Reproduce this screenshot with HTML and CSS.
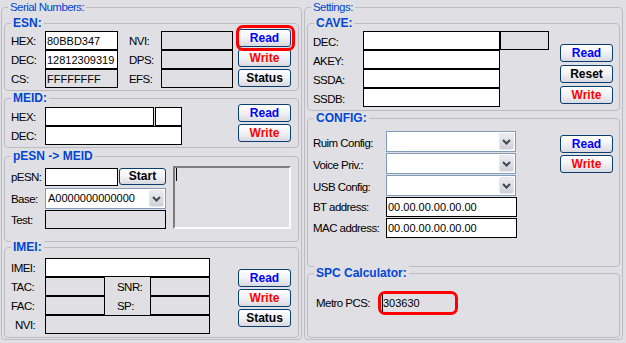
FILE: index.html
```html
<!DOCTYPE html>
<html lang="en">
<head>
    <meta charset="UTF-8">
    <meta name="viewport" content="width=device-width, initial-scale=1.0">
    <title>Serial Numbers</title>
    <link rel="stylesheet" href="styles.css">
</head>
<body>
    <div class="window">
        <!-- left side -->
        <section class="panel panel-serial">
            <div class="panel-title">Serial Numbers:</div>

            <div class="group group-esn">
                <div class="group-title">ESN:</div>
                <div class="group-body">
                    <div class="fields esn-grid">
                        <label>HEX:</label><input type="text" value="80BBD347">
                        <label class="col2">NVI:</label><input type="text" class="off" readonly>
                        <label>DEC:</label><input type="text" value="12812309319">
                        <label class="col2">DPS:</label><input type="text" class="off" readonly>
                        <label>CS:</label><input type="text" class="off" value="FFFFFFFF" readonly>
                        <label class="col2">EFS:</label><input type="text" class="off" readonly>
                    </div>
                    <div class="btns">
                        <div class="ring ring-btn"><button class="btn blue">Read</button></div>
                        <button class="btn red">Write</button>
                        <button class="btn">Status</button>
                    </div>
                </div>
            </div>

            <div class="group group-meid">
                <div class="group-title">MEID:</div>
                <div class="group-body">
                    <div class="fields meid-grid">
                        <label>HEX:</label><input type="text"><input type="text" class="tiny">
                        <label>DEC:</label><input type="text" class="wide">
                    </div>
                    <div class="btns">
                        <button class="btn blue">Read</button>
                        <button class="btn red">Write</button>
                    </div>
                </div>
            </div>

            <div class="group group-pesn">
                <div class="group-title">pESN -&gt; MEID</div>
                <div class="group-body">
                    <div class="fields pesn-grid">
                        <label>pESN:</label><input type="text" class="h18"><button class="btn btn-start">Start</button>
                        <label>Base:</label>
                        <div class="combo span2">
                            <span class="combo-text">A0000000000000</span>
                            <span class="combo-btn"><svg width="9" height="6" viewBox="0 0 9 6"><path d="M1 1l3.5 3.5L8 1" fill="none" stroke="#46464e" stroke-width="2"/></svg></span>
                        </div>
                        <label>Test:</label><input type="text" class="off span2" readonly>
                    </div>
                    <div class="memo"><span class="caret"></span></div>
                </div>
            </div>

            <div class="group group-imei">
                <div class="group-title">IMEI:</div>
                <div class="group-body">
                    <div class="fields imei-grid">
                        <label>IMEI:</label><input type="text" class="span3">
                        <label>TAC:</label><input type="text" class="off" readonly>
                        <label class="mid">SNR:</label><input type="text" class="off" readonly>
                        <label>FAC:</label><input type="text" class="off" readonly>
                        <label class="mid">SP:</label><input type="text" class="off" readonly>
                        <label class="nvi">NVI:</label><input type="text" class="off span3" readonly>
                    </div>
                    <div class="btns">
                        <button class="btn blue">Read</button>
                        <button class="btn red">Write</button>
                        <button class="btn">Status</button>
                    </div>
                </div>
            </div>
        </section>

        <!-- right side -->
        <section class="panel panel-settings">
            <div class="panel-title">Settings:</div>

            <div class="group group-cave">
                <div class="group-title">CAVE:</div>
                <div class="group-body">
                    <div class="fields cave-grid">
                        <label class="low">DEC:</label><input type="text"><input type="text" class="off" readonly>
                        <label class="low">AKEY:</label><input type="text">
                        <label class="low">SSDA:</label><input type="text">
                        <label class="low">SSDB:</label><input type="text">
                    </div>
                    <div class="btns">
                        <button class="btn blue">Read</button>
                        <button class="btn">Reset</button>
                        <button class="btn red">Write</button>
                    </div>
                </div>
            </div>

            <div class="group group-config">
                <div class="group-title">CONFIG:</div>
                <div class="group-body">
                    <div class="fields config-grid">
                        <label class="low">Ruim Config:</label>
                        <div class="combo">
                            <span class="combo-text"></span>
                            <span class="combo-btn"><svg width="9" height="6" viewBox="0 0 9 6"><path d="M1 1l3.5 3.5L8 1" fill="none" stroke="#46464e" stroke-width="2"/></svg></span>
                        </div>
                        <label class="low">Voice Priv.:</label>
                        <div class="combo">
                            <span class="combo-text"></span>
                            <span class="combo-btn"><svg width="9" height="6" viewBox="0 0 9 6"><path d="M1 1l3.5 3.5L8 1" fill="none" stroke="#46464e" stroke-width="2"/></svg></span>
                        </div>
                        <label class="low">USB Config:</label>
                        <div class="combo">
                            <span class="combo-text"></span>
                            <span class="combo-btn"><svg width="9" height="6" viewBox="0 0 9 6"><path d="M1 1l3.5 3.5L8 1" fill="none" stroke="#46464e" stroke-width="2"/></svg></span>
                        </div>
                        <label>BT address:</label><input type="text" value="00.00.00.00.00.00">
                        <label>MAC address:</label><input type="text" value="00.00.00.00.00.00">
                    </div>
                    <div class="btns">
                        <button class="btn blue">Read</button>
                        <button class="btn red">Write</button>
                    </div>
                </div>
            </div>

            <div class="group group-spc">
                <div class="group-title">SPC Calculator:</div>
                <div class="group-body">
                    <label class="spc-label">Metro PCS:</label>
                    <div class="ring ring-pcs"><input type="text" class="off" value="303630" readonly></div>
                </div>
            </div>
        </section>
    </div>
</body>
</html>
```

FILE: styles.css
```css
* { margin: 0; padding: 0; box-sizing: border-box; }
body { background: #e0dfe3; color: #000; font: 11.5px "Liberation Sans", Arial, sans-serif; letter-spacing: -0.55px; }

/* frame */
.window { display: flex; align-items: flex-start; padding: 7px 0 0 1px; }
.panel { border: 1px solid #bdbcc2; border-radius: 4px; padding: 0 2px 1px; }
.panel-serial { width: 301px; }
.panel-settings { width: 319px; margin-left: 2px; }
.panel-title, .group-title { width: fit-content; height: 14px; line-height: 14px; margin: -8px 0 0 4px; padding: 0 2px; background: #e0dfe3; color: #0046d5; white-space: nowrap; }
.group { border: 1px solid #bdbcc2; border-radius: 4px; }
.group-title { margin-left: 6px; font: bold 12px "Liberation Sans", Arial, sans-serif; letter-spacing: 0; }
.group-body { display: flex; align-items: flex-start; padding: 0 7px 2px 6px; }

.group-esn { margin-top: 9px; }
.group-meid { margin-top: 7px; }
.group-pesn { margin-top: 8px; }
.group-imei { margin-top: 5px; }
.group-cave { margin-top: 9px; }
.group-config { margin-top: 7px; }
.group-spc { margin-top: 6px; }

/* fields */
.fields { display: grid; }
.fields label { align-self: center; line-height: 14px; white-space: nowrap; }
.fields label.low { padding-top: 3px; }
input { display: block; width: 100%; min-width: 0; height: 19px; border: 1px solid #000; border-radius: 0; background: #fff; padding: 0 1px; font: 11px "Liberation Sans", Arial, sans-serif; color: #000; outline: none; }
input.off { background: #e0dfe3; }
.span2 { grid-column: span 2; }
.span3 { grid-column: span 3; }

.esn-grid { grid-template-columns: 34px 73px 43px 72px; grid-auto-rows: 19px; margin-top: 1px; }
.esn-grid .col2 { padding-left: 11px; }

.meid-grid { grid-template-columns: 34px 109px 28px; grid-auto-rows: 19px; margin-top: 2px; }
.meid-grid .tiny { width: 27px; justify-self: end; }
.meid-grid .wide { grid-column: 2 / 4; }

.pesn-grid { grid-template-columns: 34px 73px 48px; grid-template-rows: 20px 22px 19px; margin-top: 5px; }
.pesn-grid > * { align-self: start; }
.pesn-grid label { align-self: center; }
.pesn-grid label:first-child { margin-top: -2px; }
.pesn-grid .h18 { height: 18px; }
.group-pesn .group-body { padding-bottom: 12px; }

.imei-grid { grid-template-columns: 34px 60px 45px 60px; grid-auto-rows: 19px; margin-top: 4px; }
.imei-grid .mid { padding-left: 12px; }
.imei-grid .nvi { padding-left: 4px; }
.group-imei .group-body { padding-bottom: 3px; }

.group-cave .group-body, .group-config .group-body { padding: 0 6px 3px 5px; }
.cave-grid { grid-template-columns: 50px 137px 49px; grid-auto-rows: 19px; margin-top: 1px; }
.cave-grid label { grid-column: 1; }

.group-config .group-body { padding-bottom: 28px; }
.config-grid { grid-template-columns: 73px 131px; grid-template-rows: 21px 21px 21px 20px 20px; row-gap: 1px; margin-top: 6px; }
.config-grid input { height: 20px; }
.config-grid .combo { width: 130px; }

.group-spc .group-body { padding: 13px 0 24px 8px; }
.spc-label { width: 66px; line-height: 20px; }
.ring-pcs input { width: 74px; height: 20px; padding-left: 0; }

/* combo box */
.combo { display: flex; height: 21px; padding: 1px; border: 1px solid #7f9db9; background: #fff; }
.combo-text { flex: 1; padding-left: 1px; font: 11px "Liberation Sans", Arial, sans-serif; letter-spacing: 0; line-height: 17px; }
.combo-btn { display: flex; align-items: center; justify-content: center; width: 15px; border: 1px solid #e6e6ec; border-radius: 2px; background: linear-gradient(#ececf1, #cfcfd8); }

/* memo */
.memo { width: 120px; height: 63px; margin: 3px 0 0 7px; border: 2px solid; border-color: #7d7d7d #fbfbf8 #fbfbf8 #7d7d7d; }
.caret { display: block; width: 1px; height: 13px; margin-left: 1px; background: #000; }

/* buttons */
.btns { display: flex; flex-direction: column; gap: 2px; margin-left: auto; }
.btn { display: block; width: 53px; height: 18px; border: 1px solid #0a3e70; border-radius: 3px; background: linear-gradient(#ffffff, #f2f2f5 50%, #d9d9e1); font: bold 12px "Liberation Sans", Arial, sans-serif; letter-spacing: 0; line-height: 16px; text-align: center; color: #000; }
.btn.blue { color: #0000ff; }
.btn.red { color: #ff0000; }
.btn-start { width: 47px; height: 17px; margin-left: 1px; line-height: 15px; }

.group-esn .btns { margin-top: -1px; }
.group-meid .btns { margin-top: -1px; }
.group-imei .btns { margin-top: 15px; }
.group-cave .btns { margin-top: 14px; gap: 3px; }
.group-config .btns { margin-top: 10px; }

/* red marks drawn over the controls */
.ring { position: relative; }
.ring::after { content: ""; position: absolute; border: 3px solid #f00; border-radius: 7px; pointer-events: none; }
.ring-btn::after { top: -4px; left: -2px; right: -4px; bottom: -4px; }
.ring-pcs::after { top: -2px; left: -4px; right: -2px; bottom: -2px; }
```
